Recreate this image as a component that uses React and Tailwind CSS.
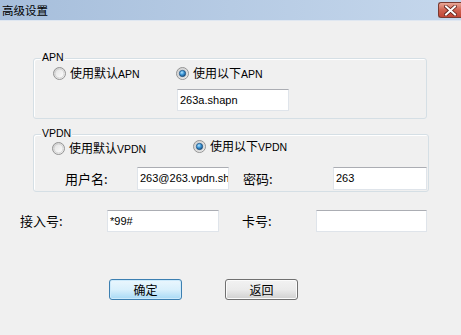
import React from "react";

const Radio = ({ checked }) => (
  <svg width="13" height="13" viewBox="0 0 13 13" className="shrink-0 block">
    <defs>
      <linearGradient id="rgOuter" x1="0" y1="0" x2="1" y2="1">
        <stop offset="0" stopColor="#cfcfcf" />
        <stop offset="1" stopColor="#f6f6f6" />
      </linearGradient>
      <linearGradient id="rgInner" x1="0" y1="0" x2="1" y2="1">
        <stop offset="0" stopColor="#e2e2e2" />
        <stop offset="1" stopColor="#fdfdfd" />
      </linearGradient>
      <radialGradient id="rgDot" cx="0.4" cy="0.35" r="0.75">
        <stop offset="0" stopColor="#b4e6ff" />
        <stop offset="0.45" stopColor="#3a95d8" />
        <stop offset="1" stopColor="#0f3c66" />
      </radialGradient>
    </defs>
    <circle cx="6.5" cy="6.5" r="6" fill="url(#rgOuter)" stroke="#939393" strokeWidth="1" />
    <circle cx="6.5" cy="6.5" r="4.4" fill="url(#rgInner)" stroke="#c8c8c8" strokeWidth="0.6" />
    {checked && (
      <circle cx="6.5" cy="6.5" r="3.2" fill="url(#rgDot)" stroke="#1b4b77" strokeWidth="0.7" />
    )}
  </svg>
);

const Lat = ({ children }) => (
  <span className="text-[10.5px] font-['Liberation_Sans',sans-serif]">{children}</span>
);

const RadioItem = ({ checked, cjk, lat }) => (
  <div className="flex items-center h-[13px]">
    <Radio checked={checked} />
    <span className="ml-[4px] text-[12px] leading-[13px] whitespace-nowrap text-black">
      {cjk}
      <Lat>{lat}</Lat>
    </span>
  </div>
);

const Field = ({ value, w, h = 22 }) => (
  <div
    className="bg-white border border-[#dfe4ea] border-t-[#abadb3] flex items-center pl-[2px] overflow-hidden whitespace-nowrap text-[11px] font-['Liberation_Sans',sans-serif] text-black shrink-0"
    style={{ width: w, height: h }}
  >
    {value}
  </div>
);

const Group = ({ label, className = "", children }) => (
  <div
    className={
      "relative border border-[#d5dfe5] rounded-[3px] shadow-[inset_1px_1px_0_#ffffff] " + className
    }
  >
    <span className="absolute left-[7px] top-[-8px] px-[1px] bg-[#f0f0f0] text-[10.5px] leading-[13px] font-['Liberation_Sans',sans-serif] text-black">
      {label}
    </span>
    {children}
  </div>
);

const Label = ({ children, w }) => (
  <div
    className="text-[13px] leading-[16px] text-black whitespace-nowrap shrink-0"
    style={{ width: w }}
  >
    {children}
  </div>
);

export default function App() {
  return (
    <div className="w-[461px] h-[335px] overflow-hidden bg-[#f0f0f0] font-['Noto_Sans_CJK_SC',sans-serif] text-black">
      {/* title bar */}
      <div className="h-[21px] flex items-start bg-gradient-to-r from-[#a6bedb] via-[#b6cbe4] to-[#c5d7ec] border-b border-[#dfe7f1]">
        <div className="pl-[2px] pt-[2px] text-[11.5px] leading-[16px] text-black">高级设置</div>
        <div className="ml-auto mt-[2px] w-[23px] h-[16px] rounded-l-[3px] border border-r-0 border-[#7a3a30] bg-gradient-to-b from-[#e8a898] via-[#cf6250] to-[#c24535] flex items-center justify-center pl-[1px]">
          <svg width="13" height="11" viewBox="0 0 13 11">
            <path d="M2 1.5 L11 9.5 M11 1.5 L2 9.5" stroke="#5a1e17" strokeWidth="3.6" strokeLinecap="square" />
            <path d="M2 1.5 L11 9.5 M11 1.5 L2 9.5" stroke="#ffffff" strokeWidth="2" strokeLinecap="square" />
          </svg>
        </div>
      </div>

      {/* APN */}
      <Group label="APN" className="mt-[37px] ml-[33px] w-[394px] h-[61px] pl-[19px] pt-[8px]">
        <div className="flex">
          <div className="w-[123px]">
            <RadioItem cjk="使用默认" lat="APN" />
          </div>
          <div>
            <RadioItem checked cjk="使用以下" lat="APN" />
            <div className="mt-[9px] ml-[1px]">
              <Field value="263a.shapn" w={112} />
            </div>
          </div>
        </div>
      </Group>

      {/* VPDN */}
      <Group label="VPDN" className="mt-[15px] ml-[33px] w-[396px] h-[58px] pt-[6px]">
        <div className="flex items-start pl-[18px]">
          <div className="w-[141px] mt-[1px]">
            <RadioItem cjk="使用默认" lat="VPDN" />
          </div>
          <div className="-mt-[1px]">
            <RadioItem checked cjk="使用以下" lat="VPDN" />
          </div>
        </div>
        <div className="flex items-center mt-[12px] pl-[31px]">
          <Label w={72}>用户名:</Label>
          <Field value="263@263.vpdn.shapn" w={92} h={23} />
          <div className="ml-[14px]">
            <Label w={90}>密码:</Label>
          </div>
          <Field value="263" w={94} h={23} />
        </div>
      </Group>

      {/* 接入号 / 卡号 */}
      <div className="flex items-center mt-[18px] ml-[20px]">
        <Label w={87}>接入号:</Label>
        <Field value="*99#" w={112} />
        <div className="ml-[23px]">
          <Label w={74}>卡号:</Label>
        </div>
        <Field value="" w={111} />
      </div>

      {/* buttons */}
      <div className="flex mt-[47px] ml-[109px]">
        <button className="w-[73px] h-[21px] rounded-[3px] border border-[#3c7fb1] bg-gradient-to-b from-[#eaf6fd] via-[#d9f0fc] to-[#a7d9f5] shadow-[inset_0_0_0_1px_#cdeafb] text-[12px] leading-[19px] text-black">
          确定
        </button>
        <button className="ml-[43px] w-[73px] h-[21px] rounded-[3px] border border-[#707070] bg-gradient-to-b from-[#f2f2f2] via-[#ebebeb] to-[#d0d0d0] shadow-[inset_0_0_0_1px_#fbfbfb] text-[12px] leading-[19px] text-black">
          返回
        </button>
      </div>
    </div>
  );
}
